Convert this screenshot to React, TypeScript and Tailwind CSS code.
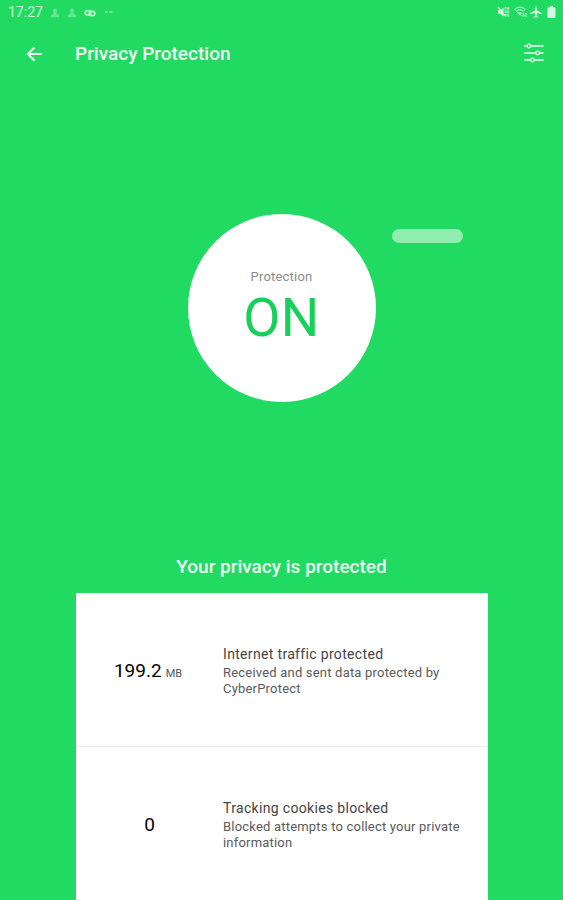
import type { ReactNode } from "react";

type Stat = {
  value: string;
  unit?: string;
  title: string;
  description: string;
};

const stats: Stat[] = [
  {
    value: "199.2",
    unit: "MB",
    title: "Internet traffic protected",
    description: "Received and sent data protected by CyberProtect",
  },
  {
    value: "0",
    title: "Tracking cookies blocked",
    description: "Blocked attempts to collect your private information",
  },
];

function Glyph({ className, children }: { className: string; children: ReactNode }) {
  return (
    <svg viewBox="0 0 24 24" fill="currentColor" className={`block shrink-0 ${className}`} aria-hidden="true">
      {children}
    </svg>
  );
}

function PersonGlyph() {
  return (
    <Glyph className="size-[10px] opacity-40">
      <circle cx="12" cy="7" r="5" />
      <path d="M2 22v-3c0-2 3-3 6-5l1-4h6l1 4c3 2 6 3 6 5v3z" />
    </Glyph>
  );
}

function StatusBar() {
  return (
    <div className="flex h-[25px] shrink-0 items-center justify-between pl-[8px] pr-[7px] text-[#d3f8df]">
      <div className="flex items-center">
        <span className="w-[42px] text-[14px] leading-[25px]">17:27</span>
        <PersonGlyph />
        <span className="w-[7px]" />
        <PersonGlyph />
        <svg viewBox="0 0 12 8" className="ml-[7px] h-[8px] w-[12px] opacity-85" fill="none" stroke="currentColor" strokeWidth="1.8">
          <rect x="1.2" y="1.6" width="5.6" height="4.2" rx="2.1" />
          <rect x="5.2" y="2.4" width="5.6" height="4.2" rx="2.1" />
        </svg>
        <svg viewBox="0 0 8 2" className="mb-px ml-[9px] h-[2px] w-[8px] opacity-60" fill="currentColor">
          <rect x="0" y="0.3" width="3" height="1.4" />
          <rect x="4.5" y="0.3" width="3" height="1.4" />
        </svg>
      </div>
      <div className="flex items-center pb-[2px]">
        <svg viewBox="0 0 13 12" className="h-[12px] w-[13px]" fill="none" stroke="currentColor">
          <path d="M1 4.2h2L6.5 1.5v9L3 7.8H1z" fill="currentColor" stroke="none" />
          <path d="M0.8 0.8l7 8.6" strokeWidth="1.3" />
          <path d="M8.6 1v10M11.3 1.2v9.6" strokeWidth="1.8" strokeDasharray="2.6 0.9" opacity="0.85" />
        </svg>
        <svg viewBox="0 0 14 12" className="ml-[4px] h-[12px] w-[14px]" fill="none" stroke="currentColor">
          <path d="M0.8 3.2C4 0.6 8 0.6 11.2 3.2M2.6 5.2c2-1.5 4.8-1.5 6.8 0" strokeWidth="1.1" opacity="0.7" />
          <path d="M0.8 3.2L6.4 9.8M11.2 3.2L9.6 5.2" strokeWidth="1" opacity="0.6" />
          <path d="M4.2 6.8c1.2-.9 2.6-.9 3.8 0L6.2 9.4z" fill="currentColor" stroke="none" />
          <path d="M9.3 6.8v4M8.2 9.4l1.1 1.4 1.1-1.4M11.9 11V7M10.8 8.4L11.9 7l1.1 1.4" strokeWidth="0.9" />
        </svg>
        <Glyph className="ml-[1px] size-[14px]">
          <path d="M22 16v-2l-8.5-5V3.5a1.5 1.5 0 0 0-3 0V9L2 14v2l8.5-2.5V19L8 20.5V22l4-1 4 1v-1.5L13.5 19v-5.5z" />
        </Glyph>
        <svg viewBox="0 0 9 12" className="ml-[4px] h-[12px] w-[9px]" fill="currentColor">
          <path d="M3 0h3v1.2h1.5a1 1 0 0 1 1 1V11a1 1 0 0 1-1 1h-6a1 1 0 0 1-1-1V2.2a1 1 0 0 1 1-1H3z" />
        </svg>
      </div>
    </div>
  );
}

function Toolbar() {
  return (
    <header className="flex h-[58px] shrink-0 items-center pb-px pl-[26px] pr-[19px] text-[#effdf3]">
      <button aria-label="Back" className="w-[49px]">
        <svg viewBox="0 0 16 16" className="block size-[16px]" fill="none" stroke="currentColor" strokeWidth="2">
          <path d="M16 8H2M8.6 1.2L1.8 8l6.8 6.8" />
        </svg>
      </button>
      <h1 className="flex-1 text-[19px] font-medium leading-[24px]">Privacy Protection</h1>
      <button aria-label="Settings" className="pb-[2px]">
        <svg viewBox="0 0 20 20" className="block size-[20px]" fill="none" stroke="currentColor" strokeWidth="1.3">
          <path d="M0.3 3H3M6.600 3h12.900M0.300 10h11.500M15.400 10h4.100M0.300 17h6.300M10.200 17h9.300" />
          <circle cx="4.8" cy="3" r="1.8" />
          <circle cx="13.6" cy="10" r="1.8" />
          <circle cx="8.4" cy="17" r="1.8" />
        </svg>
      </button>
    </header>
  );
}

function StatRow({ stat }: { stat: Stat }) {
  return (
    <li className="flex h-[154px] border-b border-[#ececec] pt-[52px]">
      <div className="flex h-[52px] w-[147px] items-center justify-center gap-[4px] text-black">
        <span className="text-[19px] leading-[24px]">{stat.value}</span>
        {stat.unit && <span className="mr-[3px] pt-[5px] text-[11px] leading-[16px] text-[#555]">{stat.unit}</span>}
      </div>
      <div className="w-[250px]">
        <h3 className="text-[14px] leading-[18px] tracking-[0.33px] text-[#444]">{stat.title}</h3>
        <p className="mt-[2px] text-[13px] leading-[16px] tracking-[0.2px] text-[#5a5a5a]">{stat.description}</p>
      </div>
    </li>
  );
}

export default function App() {
  return (
    <div className="flex h-[900px] w-full flex-col overflow-hidden bg-[#21da61] font-[Roboto,sans-serif]">
      <StatusBar />
      <Toolbar />

      <main className="flex flex-1 flex-col items-center">
        <div className="relative mt-[131px] flex size-[188px] shrink-0 flex-col items-center rounded-full bg-white pt-[55px]">
          <span className="text-[13px] leading-[16px] tracking-[0.2px] text-[#8c8c8c]">Protection</span>
          <span className="mt-[1px] text-[54px] leading-[64px] tracking-[0.5px] text-[#16d05a]">ON</span>
          <span className="absolute left-[204px] top-[15px] h-[14px] w-[71px] rounded-full bg-white/50" />
        </div>

        <h2 className="mt-[153px] text-[19px] font-medium leading-[24px] text-[#effdf3]">
          Your privacy is protected
        </h2>

        <ul className="mt-[14px] ml-px w-[412px] bg-white">
          {stats.map((stat) => (
            <StatRow key={stat.title} stat={stat} />
          ))}
        </ul>
      </main>
    </div>
  );
}
